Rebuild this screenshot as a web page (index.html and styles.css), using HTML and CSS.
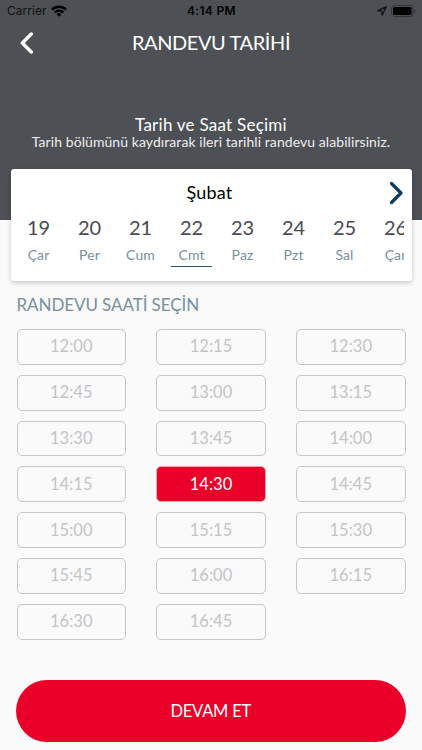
FILE: index.html
```html
<!DOCTYPE html>
<html lang="tr">
<head>
  <meta charset="UTF-8" />
  <meta name="viewport" content="width=device-width, initial-scale=1.0" />
  <title>Randevu Tarihi</title>
  <link rel="stylesheet" href="styles.css">
</head>
<body>
  <header class="header">
    <div class="status">
      <div class="carrier">
        <span>Carrier</span>
        <svg width="16" height="12" viewBox="0 0 16 12" fill="none" stroke="#000" stroke-width="2.5">
          <path d="M1 4.6a9.9 9.9 0 0 1 14 0" />
          <path d="M3.7 7.5a6 6 0 0 1 8.6 0" />
          <path d="M8 11.8L5.6 9.3a3.4 3.4 0 0 1 4.8 0z" fill="#000" stroke="none" />
        </svg>
      </div>
      <div class="clock">4:14 PM</div>
      <div class="battery">
        <svg width="10" height="10" viewBox="0 0 10 10" fill="none" stroke="#111" stroke-width="1.3" stroke-linejoin="round">
          <path d="M9.2.8L.9 4.7l3.9.5.4 4z" />
        </svg>
        <svg width="25" height="12" viewBox="0 0 25 12">
          <rect x=".5" y=".5" width="21.5" height="11" rx="3" fill="none" stroke="#303236" />
          <rect x="2" y="2" width="18.5" height="8" rx="1.6" />
          <path d="M23.2 4.2q1.3.6 1.3 1.8t-1.3 1.8z" fill="#303236" />
        </svg>
      </div>
    </div>
    <div class="navbar">
      <svg class="back" width="14" height="22" viewBox="0 0 14 22" fill="none" stroke="#fff" stroke-width="3.4" stroke-linecap="round" stroke-linejoin="round">
        <path d="M11.3 2L2.3 11l9 9" />
      </svg>
      <h1>RANDEVU TARİHİ</h1>
    </div>
    <div class="intro">
      <h2>Tarih ve Saat Seçimi</h2>
      <p>Tarih bölümünü kaydırarak ileri tarihli randevu alabilirsiniz.</p>
    </div>
  </header>

  <section class="calendar">
    <div class="month">
      <span>Şubat</span>
      <svg class="next" width="15" height="24" viewBox="0 0 15 24" fill="none" stroke="#0f3c60" stroke-width="3.2" stroke-linecap="round" stroke-linejoin="round">
        <path d="M2.5 2.5l9.5 9.5-9.5 9.5" />
      </svg>
    </div>
    <div class="days">
      <div class="day"><b>19</b><span>Çar</span></div>
      <div class="day"><b>20</b><span>Per</span></div>
      <div class="day"><b>21</b><span>Cum</span></div>
      <div class="day active"><b>22</b><span>Cmt</span></div>
      <div class="day"><b>23</b><span>Paz</span></div>
      <div class="day"><b>24</b><span>Pzt</span></div>
      <div class="day"><b>25</b><span>Sal</span></div>
      <div class="day"><b>26</b><span>Çar</span></div>
    </div>
  </section>

  <section class="times">
    <h3>RANDEVU SAATİ SEÇİN</h3>
    <div class="slots">
      <button class="slot">12:00</button>
      <button class="slot">12:15</button>
      <button class="slot">12:30</button>
      <button class="slot">12:45</button>
      <button class="slot">13:00</button>
      <button class="slot">13:15</button>
      <button class="slot">13:30</button>
      <button class="slot">13:45</button>
      <button class="slot">14:00</button>
      <button class="slot">14:15</button>
      <button class="slot selected">14:30</button>
      <button class="slot">14:45</button>
      <button class="slot">15:00</button>
      <button class="slot">15:15</button>
      <button class="slot">15:30</button>
      <button class="slot">15:45</button>
      <button class="slot">16:00</button>
      <button class="slot">16:15</button>
      <button class="slot">16:30</button>
      <button class="slot">16:45</button>
    </div>
  </section>

  <button class="continue">DEVAM ET</button>
</body>
</html>
```
FILE: styles.css
```css
* {
  box-sizing: border-box;
}
body {
  margin: 0;
  height: 750px;
  overflow: hidden;
  background: #fafafa;
  font-family: Lato, "Open Sans", sans-serif;
}
h1, h2, h3, p {
  margin: 0;
  font-weight: normal;
}
button {
  padding: 0;
  font-family: inherit;
}
svg {
  display: block;
}
.header {
  height: 220px;
  background: #4d5055;
  color: #fff;
}
.status {
  display: grid;
  grid-template-columns: 1fr auto 1fr;
  align-items: center;
  height: 21px;
  padding: 0 6px 0 7px;
  color: #000;
  font-family: Inter, sans-serif;
  font-size: 12px;
}
.carrier {
  display: flex;
  align-items: center;
  gap: 4px;
  color: #111;
  letter-spacing: 0.05px;
}
.clock {
  font-weight: 600;
  letter-spacing: 0.3px;
}
.battery {
  display: flex;
  align-items: center;
  justify-content: flex-end;
  gap: 4px;
}
.navbar {
  display: grid;
  grid-template-columns: 40px 1fr 40px;
  align-items: center;
  height: 43px;
}
.back {
  margin-left: 20px;
}
h1 {
  padding-bottom: 1px;
  font-size: 20px;
  line-height: 24px;
  letter-spacing: -0.4px;
  text-align: center;
}
.intro {
  padding-top: 51px;
  text-align: center;
}
h2 {
  font-size: 17px;
  line-height: 20px;
  letter-spacing: 0.25px;
}
.intro p {
  font-size: 14px;
  line-height: 13px;
  letter-spacing: 0.07px;
  color: #eee;
}
.calendar {
  height: 112px;
  margin: -51px 10px 0 11px;
  padding-top: 8px;
  background: #fff;
  border-radius: 3px;
  box-shadow: 0 2px 5px rgba(0, 0, 0, 0.2);
}
.month {
  display: grid;
  grid-template-columns: 40px 1fr 40px;
  align-items: center;
  height: 31px;
  font-size: 18px;
  text-align: center;
}
.month span {
  grid-column: 2;
  padding: 0 4px 2px 0;
  letter-spacing: 0.2px;
}
.next {
  margin-left: 17px;
}
.days {
  display: flex;
  margin: 6px 8px 0 2px;
  overflow: hidden;
}
.day {
  display: flex;
  flex: none;
  flex-direction: column;
  align-items: center;
  width: 51px;
  height: 54px;
}
.day b {
  font-size: 20px;
  font-weight: normal;
  line-height: 26px;
  color: #4a4b50;
}
.day span {
  width: 41px;
  height: 27px;
  padding-top: 6px;
  font-size: 14px;
  line-height: 17px;
  letter-spacing: 0.1px;
  text-align: center;
  color: #78909c;
}
.day.active span {
  border-bottom: 1px solid #2d5078;
}
.times {
  padding: 14px 16.5px 0;
}
h3 {
  font-size: 17px;
  line-height: 20px;
  letter-spacing: -0.08px;
  color: #78909c;
}
.slots {
  display: grid;
  grid-template-columns: repeat(3, 109.5px);
  grid-auto-rows: 35.8px;
  justify-content: space-between;
  row-gap: 10px;
  margin-top: 14px;
}
.slot {
  padding-bottom: 1px;
  border: 1px solid #c6c6c9;
  border-radius: 5px;
  background: #fafafa;
  font-size: 16.5px;
  color: #c4c4c7;
}
.slot.selected {
  border-color: #f4a0ae;
  background: #eb0029;
  color: #fff;
}
.continue {
  display: block;
  width: 389.5px;
  height: 62px;
  margin: 40.5px 16px 0;
  border: none;
  border-radius: 31px;
  background: #eb0029;
  font-size: 16.5px;
  letter-spacing: -0.2px;
  color: #fff;
}
```
